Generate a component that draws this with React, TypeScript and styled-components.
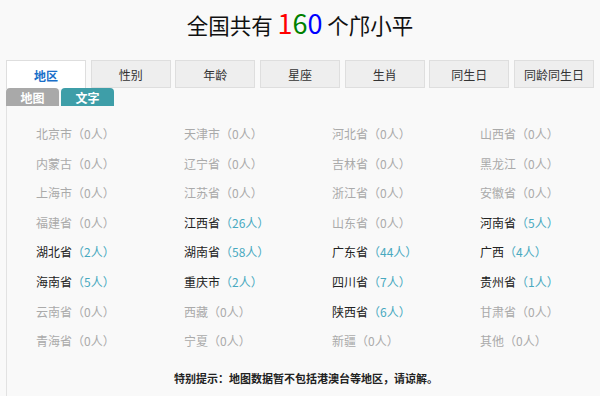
import React from 'react'
import styled, { createGlobalStyle } from 'styled-components'

const GlobalStyle = createGlobalStyle`
  html, body {
    margin: 0;
    padding: 0;
    background: #f9f9f9;
  }
  body {
    font-family: "Noto Sans CJK SC", "Noto Sans", sans-serif;
    color: #333;
  }
`

type Province = { name: string; count: number }

const provinces: Province[] = [
  { name: '北京市', count: 0 },
  { name: '天津市', count: 0 },
  { name: '河北省', count: 0 },
  { name: '山西省', count: 0 },
  { name: '内蒙古', count: 0 },
  { name: '辽宁省', count: 0 },
  { name: '吉林省', count: 0 },
  { name: '黑龙江', count: 0 },
  { name: '上海市', count: 0 },
  { name: '江苏省', count: 0 },
  { name: '浙江省', count: 0 },
  { name: '安徽省', count: 0 },
  { name: '福建省', count: 0 },
  { name: '江西省', count: 26 },
  { name: '山东省', count: 0 },
  { name: '河南省', count: 5 },
  { name: '湖北省', count: 2 },
  { name: '湖南省', count: 58 },
  { name: '广东省', count: 44 },
  { name: '广西', count: 4 },
  { name: '海南省', count: 5 },
  { name: '重庆市', count: 2 },
  { name: '四川省', count: 7 },
  { name: '贵州省', count: 1 },
  { name: '云南省', count: 0 },
  { name: '西藏', count: 0 },
  { name: '陕西省', count: 6 },
  { name: '甘肃省', count: 0 },
  { name: '青海省', count: 0 },
  { name: '宁夏', count: 0 },
  { name: '新疆', count: 0 },
  { name: '其他', count: 0 },
]

const tabs = ['地区', '性别', '年龄', '星座', '生肖', '同生日', '同龄同生日']

const Page = styled.div`
  padding: 0 6px;
`

const Title = styled.h1`
  margin: 0;
  padding-top: 5px;
  height: 60px;
  box-sizing: border-box;
  text-align: center;
  font-size: 21.5px;
  font-weight: normal;
  line-height: 36px;
  color: #111;
`

const Digit = styled.span<{ $color: string }>`
  color: ${p => p.$color};
  font-size: 27px;
`

const TabBar = styled.div`
  display: grid;
  grid-template-columns: repeat(7, 1fr);
  column-gap: 4.6px;
  height: 28px;
`

const Tab = styled.div<{ $active?: boolean }>`
  display: flex;
  align-items: center;
  justify-content: center;
  font-size: 12px;
  box-sizing: border-box;
  border: 1px solid #dedede;
  border-bottom: ${p => (p.$active ? 'none' : '1px solid #dedede')};
  background: ${p => (p.$active ? '#fff' : '#eee')};
  color: ${p => (p.$active ? '#1a6fc9' : '#333')};
  font-weight: ${p => (p.$active ? 'bold' : 'normal')};
  height: ${p => (p.$active ? '29px' : '28px')};
`

const SubTabs = styled.div`
  display: flex;
  gap: 2px;
  height: 18px;
`

const SubTab = styled.div<{ $active?: boolean }>`
  width: 53px;
  display: flex;
  align-items: center;
  justify-content: center;
  border-radius: 4px 4px 0 0;
  font-size: 12px;
  font-weight: bold;
  color: #fff;
  background: ${p => (p.$active ? '#3e9ea8' : '#a9a9a9')};
`

const Panel = styled.div`
  border-left: 1px solid #e2e2e2;
  padding: 13px 0 20px 29px;
`

const Grid = styled.div`
  display: grid;
  grid-template-columns: repeat(4, 148px);
`

const Cell = styled.div<{ $dim: boolean }>`
  font-size: 12px;
  line-height: 29.6px;
  white-space: nowrap;
  color: ${p => (p.$dim ? '#aaa' : '#222')};
`

const Count = styled.span<{ $dim: boolean }>`
  color: ${p => (p.$dim ? '#aaa' : '#48a9c0')};
`

const Note = styled.div`
  margin-top: 14px;
  text-align: center;
  padding-right: 18px;
  font-size: 11px;
  font-weight: bold;
  color: #222;
`

const App: React.FC = () => {
  return (
    <Page>
      <GlobalStyle />
      <Title>
        全国共有 <Digit $color="#ff0000">1</Digit>
        <Digit $color="#008000">6</Digit>
        <Digit $color="#0000ff">0</Digit> 个邝小平
      </Title>
      <TabBar>
        {tabs.map((t, i) => (
          <Tab key={t} $active={i === 0}>
            {t}
          </Tab>
        ))}
      </TabBar>
      <SubTabs>
        <SubTab>地图</SubTab>
        <SubTab $active>文字</SubTab>
      </SubTabs>
      <Panel>
        <Grid>
          {provinces.map(({ name, count }) => (
            <Cell key={name} $dim={count === 0}>
              {name}
              <Count $dim={count === 0}>（{count}人）</Count>
            </Cell>
          ))}
        </Grid>
        <Note>特别提示：地图数据暂不包括港澳台等地区，请谅解。</Note>
      </Panel>
    </Page>
  )
}

export default App
